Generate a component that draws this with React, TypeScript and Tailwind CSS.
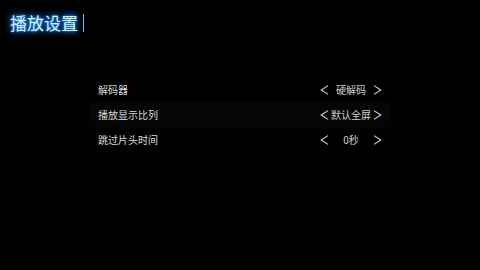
import React from "react"

const settings = [
  { label: "解码器", value: "硬解码" },
  { label: "播放显示比列", value: "默认全屏", focused: true },
  { label: "跳过片头时间", value: "0秒" },
]

function Chevron({ dir }: { dir: "left" | "right" }) {
  return (
    <svg width="9" height="10" viewBox="0 0 9 10" className="shrink-0">
      <path
        d={dir === "left" ? "M8 0.6 L1.2 5 L8 9.4" : "M1 0.6 L7.8 5 L1 9.4"}
        fill="none"
        stroke="#d4d4d4"
        strokeWidth="1.1"
      />
    </svg>
  )
}

export default function App() {
  return (
    <div
      className="h-[270px] w-[480px] overflow-hidden bg-black"
      style={{ fontFamily: '"Noto Sans CJK SC", "Noto Sans", sans-serif' }}
    >
      <div className="flex h-[45px] items-center pl-[10px]">
        <span
          className="text-[17px] leading-none text-[#d6ecff]"
          style={{ textShadow: "0 0 2px #2a96ff, 0 0 5px #1e8fff, 0 0 8px #1672d8" }}
        >
          播放设置
        </span>
        <span className="ml-[5px] h-[18px] w-[1px] bg-[#9fb8d0]" />
      </div>

      <div className="ml-[89px] mt-[32px] flex w-[302px] flex-col">
        {settings.map((s) => (
          <div
            key={s.label}
            className={`flex h-[25px] items-center justify-between pl-[9px] pr-[9px] ${
              s.focused ? "bg-[#050505]" : ""
            }`}
          >
            <span className="text-[10px] leading-none text-[#dcdcdc]">{s.label}</span>
            <div className="flex items-center">
              <Chevron dir="left" />
              <span className="w-[44px] text-center text-[10px] leading-none text-[#d0d0d0]">
                {s.value}
              </span>
              <Chevron dir="right" />
            </div>
          </div>
        ))}
      </div>
    </div>
  )
}
